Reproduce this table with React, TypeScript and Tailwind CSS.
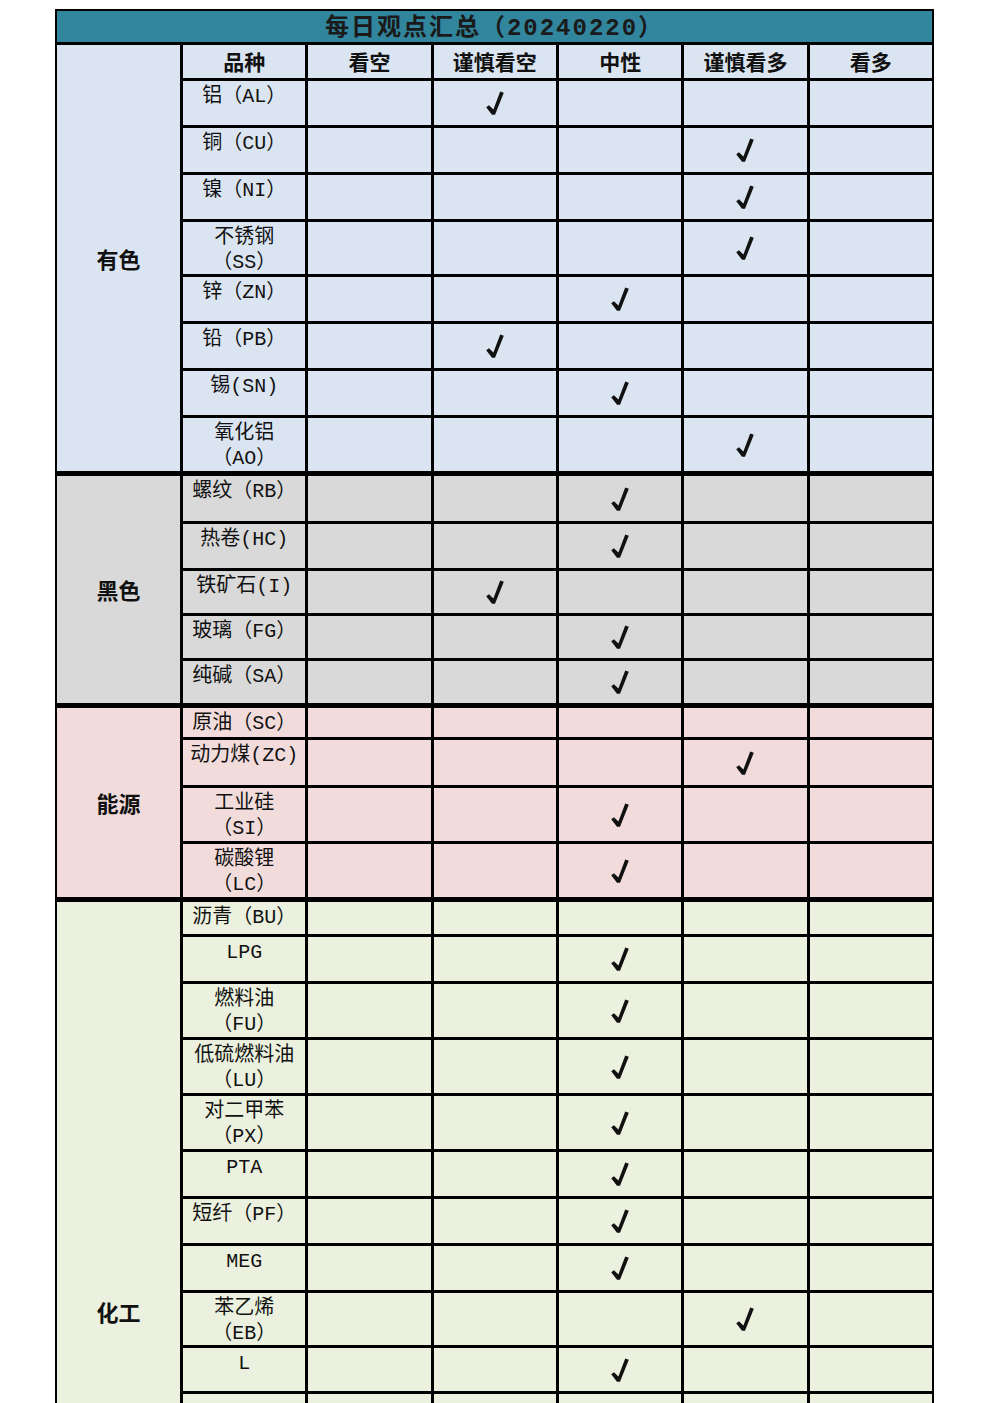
import React from "react";

type Row = { name: string; h: string; pick?: number };
type Group = { label: string; bg: string; header?: boolean; rows: Row[] };

const cols = ["看空", "谨慎看空", "中性", "谨慎看多", "看多"];

const groups: Group[] = [
  {
    label: "有色",
    bg: "bg-[#dbe5f1]",
    header: true,
    rows: [
      { name: "铝（AL）", h: "h-[44px]", pick: 1 },
      { name: "铜（CU）", h: "h-[44px]", pick: 3 },
      { name: "镍（NI）", h: "h-[44px]", pick: 3 },
      { name: "不锈钢\n（SS）", h: "h-[52px]", pick: 3 },
      { name: "锌（ZN）", h: "h-[44px]", pick: 2 },
      { name: "铅（PB）", h: "h-[44px]", pick: 1 },
      { name: "锡(SN)", h: "h-[44px]", pick: 2 },
      { name: "氧化铝\n（AO）", h: "h-[53px]", pick: 3 },
    ],
  },
  {
    label: "黑色",
    bg: "bg-[#d9d9d9]",
    rows: [
      { name: "螺纹（RB）", h: "h-[45px]", pick: 2 },
      { name: "热卷(HC)", h: "h-[44px]", pick: 2 },
      { name: "铁矿石(I)", h: "h-[42px]", pick: 1 },
      { name: "玻璃（FG）", h: "h-[42px]", pick: 2 },
      { name: "纯碱（SA）", h: "h-[42px]", pick: 2 },
    ],
  },
  {
    label: "能源",
    bg: "bg-[#f2dcdb]",
    rows: [
      { name: "原油（SC）", h: "h-[29px]" },
      { name: "动力煤(ZC)", h: "h-[45px]", pick: 3 },
      { name: "工业硅\n（SI）", h: "h-[53px]", pick: 2 },
      { name: "碳酸锂\n（LC）", h: "h-[53px]", pick: 2 },
    ],
  },
  {
    label: "化工",
    bg: "bg-[#ebf1de]",
    rows: [
      { name: "沥青（BU）", h: "h-[32px]" },
      { name: "LPG", h: "h-[44px]", pick: 2 },
      { name: "燃料油\n（FU）", h: "h-[53px]", pick: 2 },
      { name: "低硫燃料油\n（LU）", h: "h-[53px]", pick: 2 },
      { name: "对二甲苯\n（PX）", h: "h-[53px]", pick: 2 },
      { name: "PTA", h: "h-[44px]", pick: 2 },
      { name: "短纤（PF）", h: "h-[44px]", pick: 2 },
      { name: "MEG", h: "h-[44px]", pick: 2 },
      { name: "苯乙烯\n（EB）", h: "h-[52px]", pick: 3 },
      { name: "L", h: "h-[43px]", pick: 2 },
      // rows below the fold, only there so the 化工 label sits where it does
      { name: "", h: "h-[44px]" },
      { name: "", h: "h-[44px]" },
      { name: "", h: "h-[44px]" },
      { name: "", h: "h-[44px]" },
      { name: "", h: "h-[44px]" },
      { name: "", h: "h-[44px]" },
      { name: "", h: "h-[44px]" },
    ],
  },
];

const Check = () => (
  <svg width="18" height="24" viewBox="0 0 18 24" className="block">
    <polygon points="0.2,16.2 3,14.2 7.4,18.4 14.2,0.4 17.8,1.8 9,23.8 6,23.8" fill="#111" />
  </svg>
);

const font = "font-['Liberation_Mono','Noto_Sans_CJK_SC',sans-serif]";

export default function App() {
  return (
    <div className="h-[1403px] overflow-hidden bg-white pt-[9px]">
      <div className={`ml-[55px] w-[879px] bg-black p-[2px] pb-0 flex flex-col text-[#111] ${font}`}>
        <div className="h-[31px] bg-[#31859c] flex items-center justify-center pt-[4px] text-[24px] font-bold tracking-[2px] text-[#1a1a1a]">
          每日观点汇总（20240220）
        </div>

        {groups.map((g, gi) => (
          <div key={g.label} className={`flex gap-[3px] ${gi === 0 ? "mt-[3px]" : "mt-[5px]"}`}>
            <div className={`w-[123px] shrink-0 flex items-center justify-center text-[22px] font-bold font-['Noto_Sans_CJK_SC',sans-serif] ${g.bg}`}>
              {g.label}
            </div>
            <div className="flex-1 flex flex-col gap-[3px]">
              {g.header && (
                <div className="grid grid-cols-6 gap-[3px]">
                  {["品种", ...cols].map((c) => (
                    <div key={c} className={`h-[33px] flex items-center justify-center text-[21px] font-bold font-['Noto_Sans_CJK_SC',sans-serif] ${g.bg}`}>
                      {c}
                    </div>
                  ))}
                </div>
              )}
              {g.rows.map((r, ri) => (
                <div key={ri} className="grid grid-cols-6 gap-[3px]">
                  <div className={`${r.h} ${g.bg} flex justify-center pt-[3px] text-center text-[20px] leading-[25px] whitespace-pre-line`}>
                    {r.name}
                  </div>
                  {cols.map((c, ci) => (
                    <div key={c} className={`${r.h} ${g.bg} flex items-center justify-center`}>
                      {r.pick === ci && <Check />}
                    </div>
                  ))}
                </div>
              ))}
            </div>
          </div>
        ))}
      </div>
    </div>
  );
}
